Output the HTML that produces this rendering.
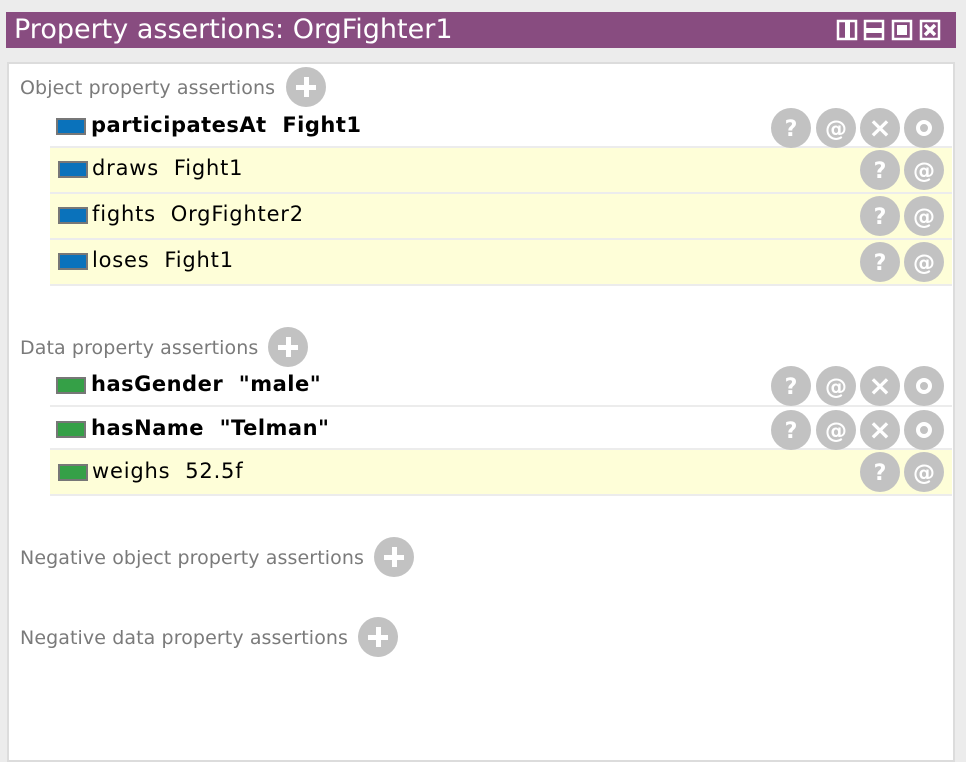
<!DOCTYPE html>
<html><head><meta charset="utf-8"><style>
*{margin:0;padding:0;box-sizing:border-box}
body{width:966px;height:700px;background:#ececec;position:relative;overflow:hidden;font-family:"DejaVu Sans","Liberation Sans",sans-serif}
.title{position:absolute;left:6px;top:12px;width:950px;height:36px;background:#884c80;color:#fff;font-size:27px;line-height:36px;padding-left:8px}
.panel{position:absolute;left:7px;top:62px;width:948px;height:700px;background:#fff;border:2px solid #dcdcdc}
.lbl{position:absolute;color:#7a7a7a;font-size:19px;letter-spacing:0.1px}
.c{position:absolute;width:40px;height:40px;border-radius:50%;background:#c2c2c2;color:#fff;font-weight:bold;font-size:22px;text-align:center;line-height:44px}
.x{font-size:28px;line-height:40px}
.plus::before{content:"";position:absolute;left:10px;top:17.5px;width:20px;height:5px;background:#fff}
.plus::after{content:"";position:absolute;left:17.5px;top:10px;width:5px;height:20px;background:#fff}
.ring::before{content:"";position:absolute;left:12px;top:12px;width:16px;height:16px;border:4px solid #fff;border-radius:50%;box-sizing:border-box}
.row{position:absolute;left:50px;width:902px}
.y{background:#fefed8}
.sep{position:absolute;left:50px;width:902px;height:2px;background:#ececec}
.t{position:absolute;font-size:21px;color:#000;white-space:pre;letter-spacing:0.8px}
.b{font-weight:bold;letter-spacing:0.5px}
.bx{position:absolute;width:30px;height:17px;border:2px solid #777}
.blue{background:#0a72bb}.green{background:#35a047}
</style></head><body>
<div class="title">Property assertions: OrgFighter1</div>
<svg style="position:absolute;left:836px;top:19px" width="110" height="22" viewBox="0 0 110 22">
<g fill="none" stroke="#fff" stroke-width="2.5"><rect x="2" y="2" width="18" height="18"/><rect x="29" y="2" width="18" height="18"/><rect x="57" y="2" width="18" height="18"/><rect x="85" y="2" width="18" height="18"/></g>
<rect x="9" y="2" width="5" height="18" fill="#fff"/><rect x="29" y="9" width="18" height="5" fill="#fff"/><rect x="61" y="6" width="10" height="10" fill="#fff"/>
<path d="M89 6L99 16M99 6L89 16" stroke="#fff" stroke-width="3.5"/>
</svg>
<div class="panel"></div>

<div class="lbl" style="left:20px;top:77px">Object property assertions</div>
<div class="c plus" style="left:286px;top:67px"></div>

<div class="bx blue" style="left:56px;top:118px"></div><div class="t b" style="left:91px;top:113px">participatesAt  Fight1</div>
<div class="sep" style="top:146px"></div>
<div class="row y" style="top:148px;height:44px"></div>
<div class="bx blue" style="left:58px;top:161px"></div><div class="t" style="left:92px;top:156px">draws  Fight1</div>
<div class="sep" style="top:192px"></div>
<div class="row y" style="top:194px;height:44px"></div>
<div class="bx blue" style="left:58px;top:207px"></div><div class="t" style="left:92px;top:202px">fights  OrgFighter2</div>
<div class="sep" style="top:238px"></div>
<div class="row y" style="top:240px;height:44px"></div>
<div class="bx blue" style="left:58px;top:253px"></div><div class="t" style="left:92px;top:248px">loses  Fight1</div>
<div class="sep" style="top:284px"></div>

<div class="lbl" style="left:20px;top:337px">Data property assertions</div>
<div class="c plus" style="left:268px;top:327px"></div>

<div class="bx green" style="left:56px;top:377px"></div><div class="t b" style="left:91px;top:372px">hasGender  "male"</div>
<div class="sep" style="top:405px"></div>
<div class="bx green" style="left:56px;top:421px"></div><div class="t b" style="left:91px;top:416px">hasName  "Telman"</div>
<div class="sep" style="top:448px"></div>
<div class="row y" style="top:450px;height:44px"></div>
<div class="bx green" style="left:58px;top:464px"></div><div class="t" style="left:92px;top:459px">weighs  52.5f</div>
<div class="sep" style="top:494px"></div>

<div class="lbl" style="left:20px;top:547px">Negative object property assertions</div>
<div class="c plus" style="left:374px;top:537px"></div>
<div class="lbl" style="left:20px;top:627px">Negative data property assertions</div>
<div class="c plus" style="left:358px;top:617px"></div>

<div class="c" style="left:771px;top:108px">?</div><div class="c" style="left:816px;top:108px">@</div><div class="c x" style="left:860px;top:108px">×</div><div class="c ring" style="left:904px;top:108px"></div>
<div class="c" style="left:860px;top:150px">?</div><div class="c" style="left:904px;top:150px">@</div>
<div class="c" style="left:860px;top:196px">?</div><div class="c" style="left:904px;top:196px">@</div>
<div class="c" style="left:860px;top:242px">?</div><div class="c" style="left:904px;top:242px">@</div>
<div class="c" style="left:771px;top:366px">?</div><div class="c" style="left:816px;top:366px">@</div><div class="c x" style="left:860px;top:366px">×</div><div class="c ring" style="left:904px;top:366px"></div>
<div class="c" style="left:771px;top:410px">?</div><div class="c" style="left:816px;top:410px">@</div><div class="c x" style="left:860px;top:410px">×</div><div class="c ring" style="left:904px;top:410px"></div>
<div class="c" style="left:860px;top:452px">?</div><div class="c" style="left:904px;top:452px">@</div>
</body></html>
